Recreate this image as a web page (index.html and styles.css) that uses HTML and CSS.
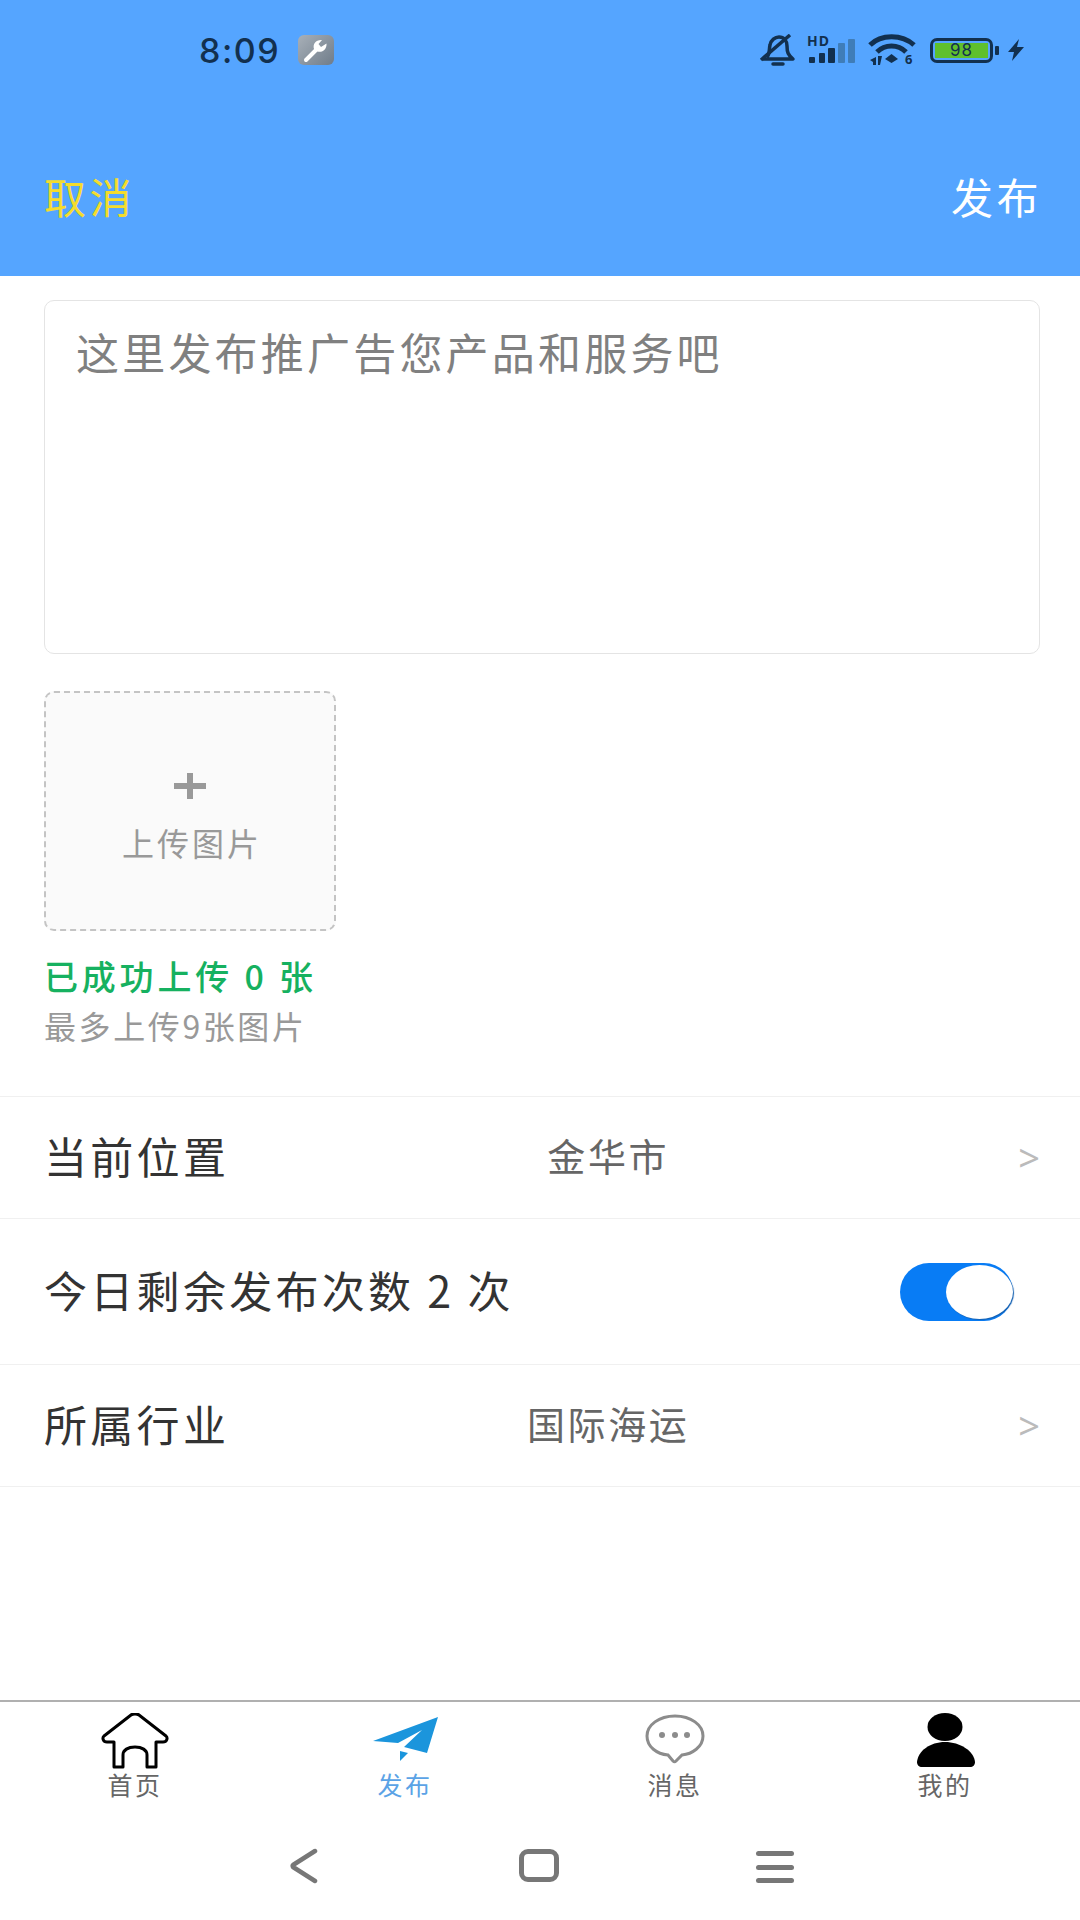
FILE: index.html
```html
<!DOCTYPE html>
<html lang="zh-CN">
<head>
  <meta charset="UTF-8">
  <meta name="viewport" content="width=device-width, initial-scale=1.0">
  <title>发布</title>
  <link rel="stylesheet" href="styles.css">
</head>
<body>
  <div class="page">
    <header class="top">
      <div class="status-bar">
        <div class="status-left">
          <span class="clock">8:09</span>
          <span class="tool-badge">
            <svg width="26" height="26" viewBox="0 0 26 26"><path d="M3 23 L13 13" stroke="#fff" stroke-width="4" stroke-linecap="round"/><path d="M11 12 C9.5 7 13 2.500 19 3 L15.500 7 L18 10 L23.500 6.500 C24 12 19.500 16 14.500 14.500 Z" fill="#fff"/></svg>
          </span>
        </div>
        <div class="status-right">
          <svg class="ic-bell" width="37" height="32" viewBox="0 0 37 32"><path d="M8 23 C11 20 10 15 11 11 C12 6 16 3 20 3 C25 3 28 7 28 12 C28 18 29 21 34 25 L4 25" fill="none" stroke="#12304f" stroke-width="3.500" stroke-linejoin="round"/><path d="M14 30 H24" stroke="#12304f" stroke-width="3.500" stroke-linecap="round"/><path d="M2 26 L31 1" stroke="#12304f" stroke-width="3.500"/></svg>
          <svg class="ic-signal" width="50" height="38" viewBox="0 -3 50 38"><text x="0" y="12" class="hd-text">HD</text><rect x="2" y="23" width="6" height="6" rx="1" fill="#12304f"/><rect x="12" y="19" width="6" height="10" rx="1" fill="#12304f"/><rect x="21" y="14" width="7" height="15" rx="1" fill="#12304f"/><rect x="31" y="9" width="7" height="20" rx="1" fill="#3f7db8"/><rect x="41" y="5" width="7" height="24" rx="1" fill="#3f7db8"/></svg>
          <svg class="ic-wifi" width="48" height="38" viewBox="0 -3 48 38"><path d="M2 11 C13 0 34 0 46 11" fill="none" stroke="#12304f" stroke-width="5"/><path d="M9 18 C17 10 30 10 38 18" fill="none" stroke="#12304f" stroke-width="5"/><path d="M17 25 L23.500 20 L30 25 L23.500 29 Z" fill="#12304f"/><path d="M2 26 L8 23 V31 H5 V28 Z M10 22 H14 L12 31 H10 Z" fill="#12304f"/><text x="37" y="30" class="wifi-six">6</text></svg>
          <div class="battery"><span class="battery-level">98</span></div>
          <span class="battery-tip"></span>
          <svg class="ic-bolt" width="18" height="24" viewBox="0 0 18 24"><path d="M12 1 L1 14 H7 L5 23 L17 9 H10 Z" fill="#12304f"/></svg>
        </div>
      </div>
      <div class="action-bar">
        <span class="cancel">取消</span>
        <span class="publish">发布</span>
      </div>
    </header>

    <main class="content">
      <div class="editor">这里发布推广告您产品和服务吧</div>

      <div class="upload-box">
        <span class="plus"></span>
        <span class="upload-label">上传图片</span>
      </div>
      <p class="upload-count">已成功上传 0 张</p>
      <p class="upload-hint">最多上传9张图片</p>

      <div class="rows">
        <div class="row">
          <span class="row-title">当前位置</span>
          <span class="row-value">金华市</span>
          <span class="row-arrow">&gt;</span>
        </div>
        <div class="row row-tall">
          <span class="row-title">今日剩余发布次数 2 次</span>
          <span class="switch"><span class="knob"></span></span>
        </div>
        <div class="row">
          <span class="row-title">所属行业</span>
          <span class="row-value">国际海运</span>
          <span class="row-arrow">&gt;</span>
        </div>
      </div>
    </main>

    <nav class="tabs">
      <div class="tab">
        <svg width="68" height="56" viewBox="0 0 68 56"><path d="M13 54 V29 H6 C2 29 1 25 3 23 L30 2 C32 0.500 36 0.500 38 2 L65 23 C67 25 66 29 62 29 H55 V54 H46 V42 C46 37 41 34 34 34 C27 34 22 37 22 42 V54 Z" fill="none" stroke="#000" stroke-width="3" stroke-linejoin="round"/></svg>
        <span class="tab-label">首页</span>
      </div>
      <div class="tab tab-active">
        <svg width="68" height="56" viewBox="0 0 68 56"><path d="M2 28 L67 4 L56 40 L33 34 L51 17 L27 30 Z" fill="#1b95dc"/><path d="M29 38 L37 40 L29 48 Z" fill="#1b95dc"/></svg>
        <span class="tab-label">发布</span>
      </div>
      <div class="tab">
        <svg width="68" height="56" viewBox="0 0 68 56"><path d="M34 3 C50 3 62 12 62 23 C62 34 51 41 41 42 L35 48 C34 49 33 49 32 48 L27 42 C16 41 6 34 6 23 C6 12 18 3 34 3 Z" fill="none" stroke="#8c8c8c" stroke-width="3"/><circle cx="21" cy="22" r="3" fill="#8c8c8c"/><circle cx="34" cy="22" r="3" fill="#8c8c8c"/><circle cx="46" cy="22" r="3" fill="#8c8c8c"/></svg>
        <span class="tab-label">消息</span>
      </div>
      <div class="tab">
        <svg width="68" height="56" viewBox="0 0 68 56"><ellipse cx="34" cy="14" rx="17.500" ry="14" fill="#000"/><path d="M34 29 C49 29 63 38 64 49 C64 52 62 54 59 54 H11 C8 54 6 52 6 49 C7 38 19 29 34 29 Z" fill="#000"/></svg>
        <span class="tab-label">我的</span>
      </div>
    </nav>

    <div class="nav-bar">
      <svg width="30" height="36" viewBox="0 0 30 36"><path d="M26 3 L4 17 C3.500 17.500 3.500 18 4 19 L26 33" fill="none" stroke="#777" stroke-width="4.500" stroke-linecap="round" stroke-linejoin="round"/></svg>
      <span class="nav-home"></span>
      <span class="nav-menu"><i></i><i></i><i></i></span>
    </div>
  </div>
</body>
</html>
```

FILE: styles.css
```css
body {
  font-family: "Noto Sans CJK SC", "Noto Sans", sans-serif;
  margin: 0;
  padding: 0;
  background-color: #fff;
  color: #333;
}

.page {
  width: 1080px;
  height: 1920px;
  display: flex;
  flex-direction: column;
  overflow: hidden;
}

/* Header */
.top {
  height: 276px;
  background-color: #55a5ff;
  display: flex;
  flex-direction: column;
}

.status-bar {
  height: 100px;
  display: flex;
  justify-content: space-between;
  align-items: center;
  padding: 0 55px 0 199px;
}

.status-left,
.status-right {
  display: flex;
  align-items: center;
}

.clock {
  font-family: Inter, sans-serif;
  font-size: 34px;
  font-weight: 500;
  letter-spacing: 1.5px;
  color: #12304f;
}

.tool-badge {
  width: 36px;
  height: 30px;
  margin-left: 18px;
  border-radius: 6px;
  background: linear-gradient(135deg, #a8b0b8, #6f7c8a);
  display: flex;
  align-items: center;
  justify-content: center;
}

.status-right svg {
  display: block;
}

.ic-signal {
  margin-left: 11px;
}

.ic-wifi {
  margin-left: 11px;
}

.hd-text {
  font-family: "Noto Sans", sans-serif;
  font-size: 14px;
  font-weight: 700;
  letter-spacing: 1px;
  fill: #12304f;
}

.wifi-six {
  font-family: "Noto Sans", sans-serif;
  font-size: 13px;
  font-weight: 700;
  fill: #12304f;
}

.battery {
  width: 63px;
  height: 25px;
  margin-left: 14px;
  box-sizing: border-box;
  border: 3px solid #12304f;
  border-radius: 7px;
  padding: 2px;
  display: flex;
}

.battery-level {
  flex: 1;
  background-color: #5fc02c;
  font-family: Inter, sans-serif;
  font-size: 17px;
  line-height: 15px;
  letter-spacing: 1px;
  text-align: center;
  color: #12304f;
}

.battery-tip {
  width: 4px;
  height: 9px;
  margin-left: 2px;
  background-color: #12304f;
  border-radius: 1px;
}

.ic-bolt {
  margin-left: 8px;
}

.action-bar {
  display: flex;
  justify-content: space-between;
  padding: 67px 38px 0 44px;
  font-size: 42px;
  line-height: 58px;
  letter-spacing: 3.5px;
}

.cancel {
  color: #f4dc2c;
}

.publish {
  color: #fff;
}

/* Content */
.content {
  flex: 1;
  padding-top: 24px;
}

.editor {
  height: 354px;
  margin: 0 40px 0 44px;
  box-sizing: border-box;
  border: 1px solid #e4e4e4;
  border-radius: 10px;
  padding: 22px 31px;
  font-size: 43px;
  line-height: 56px;
  letter-spacing: 3.2px;
  color: #808080;
}

.upload-box {
  width: 292px;
  height: 240px;
  margin: 37px 0 0 44px;
  box-sizing: border-box;
  border: 2px dashed #c4c4c4;
  border-radius: 10px;
  background-color: #fafafa;
  display: flex;
  flex-direction: column;
  align-items: center;
}

.plus {
  width: 32px;
  height: 26px;
  margin-top: 80px;
  background: linear-gradient(#999, #999) center / 32px 6px no-repeat,
    linear-gradient(#999, #999) center / 6px 26px no-repeat;
}

.upload-label {
  margin: 21px 0 0 4px;
  font-size: 32px;
  line-height: 44px;
  letter-spacing: 3px;
  color: #999;
}

.upload-count {
  margin: 21px 0 0 44px;
  font-size: 34px;
  line-height: 48px;
  font-weight: 500;
  letter-spacing: 3.8px;
  color: #16b160;
}

.upload-hint {
  margin: 1px 0 0 44px;
  font-size: 32px;
  line-height: 48px;
  letter-spacing: 2.6px;
  color: #999;
}

/* Rows */
.rows {
  margin-top: 47px;
  border-top: 1px solid #f0f0f0;
}

.row {
  height: 122px;
  box-sizing: border-box;
  padding: 0 40px 0 44px;
  border-bottom: 1px solid #f0f0f0;
  display: flex;
  align-items: center;
  justify-content: space-between;
}

.row-tall {
  height: 146px;
  padding-right: 67px;
}

.row-title {
  margin-bottom: 6px;
  font-size: 43px;
  letter-spacing: 3.3px;
  color: #333;
}

.row-value {
  margin: 0 31px 6px 0;
  font-size: 38px;
  letter-spacing: 2.6px;
  color: #666;
}

.row-arrow {
  margin-bottom: 2px;
  font-family: "Noto Sans", sans-serif;
  font-size: 38px;
  color: #bbb;
}

.switch {
  width: 113px;
  height: 58px;
  border-radius: 29px;
  background-color: #087cf5;
  position: relative;
}

.knob {
  position: absolute;
  top: 2px;
  right: 0;
  width: 67px;
  height: 54px;
  border-radius: 50%;
  background-color: #fff;
  box-shadow: 1px 1px 1px #1560b0;
}

/* Tabs */
.tabs {
  height: 126px;
  border-top: 2px solid #b0b0b0;
  display: flex;
}

.tab {
  flex: 1;
  display: flex;
  flex-direction: column;
  align-items: center;
  padding-top: 11px;
  color: #666;
}

.tab svg {
  display: block;
}

.tab-label {
  font-size: 25px;
  line-height: 31px;
  letter-spacing: 2.5px;
}

.tab-active .tab-label {
  color: #5ba3e6;
}

/* System nav */
.nav-bar {
  height: 92px;
  box-sizing: border-box;
  display: flex;
  align-items: flex-start;
  padding: 20px 0 0 289px;
}

.nav-home {
  width: 40px;
  height: 33px;
  margin: 1px 0 0 200px;
  box-sizing: border-box;
  border: 5px solid #777;
  border-radius: 9px;
}

.nav-menu {
  width: 38px;
  height: 32px;
  margin: 3px 0 0 197px;
  display: flex;
  flex-direction: column;
  justify-content: space-between;
}

.nav-menu i {
  height: 5px;
  border-radius: 3px;
  background-color: #777;
}
```
